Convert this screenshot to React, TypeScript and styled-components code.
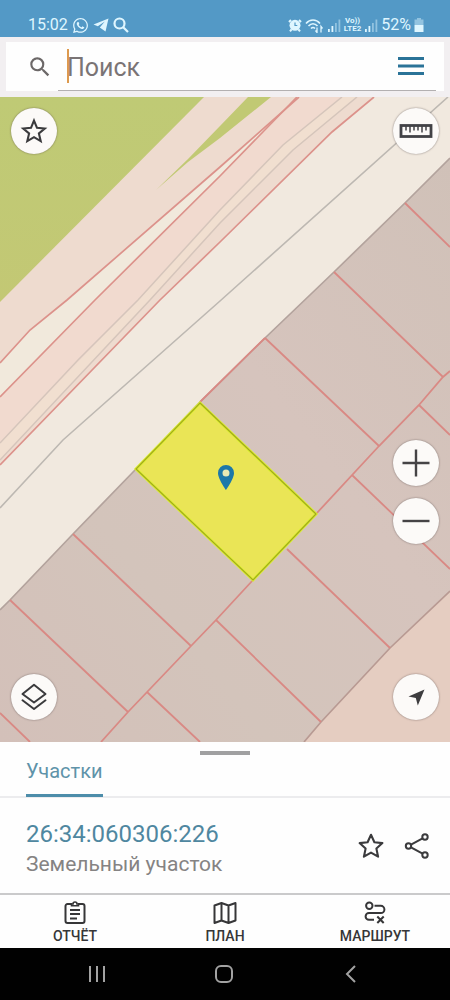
import React from "react";
import styled, { createGlobalStyle } from "styled-components";
import { FaWhatsapp } from "react-icons/fa";
import { MdSearch } from "react-icons/md";

const GlobalStyle = createGlobalStyle`
  *, *::before, *::after { box-sizing: border-box; }
  body { margin: 0; background: #fff; font-family: Roboto, "Liberation Sans", sans-serif; }
  button, input { font: inherit; color: inherit; }
  svg { display: block; flex: none; }
`;

const Screen = styled.div`
  min-height: 100vh;
  display: flex;
  flex-direction: column;
  background: #fefefe;
`;

const StatusBar = styled.div`
  height: 37px;
  flex: none;
  display: flex;
  align-items: center;
  justify-content: space-between;
  padding: 13px 26px 0 28px;
  background: #5399c6;
  color: #dff6ff;
  font-size: 16px;
  line-height: 20px;
`;

const StatusGroup = styled.div<{ $gap: number }>`
  display: flex;
  align-items: center;
  gap: ${(p) => p.$gap}px;
`;

const NetworkLabel = styled.span`
  font-size: 8px;
  line-height: 8px;
  font-weight: 700;
  text-align: center;
`;

const Header = styled.header`
  flex: none;
  height: 60px;
  padding: 5px 6px 6px;
  background: #f2eff1;
`;

const SearchCard = styled.div`
  height: 49px;
  display: flex;
  align-items: stretch;
  padding: 0 8px 0 21px;
  background: #fefefe;
  color: #6c6868;
`;

const SearchLabel = styled.label`
  width: 31px;
  flex: none;
  display: flex;
  align-items: center;
`;

const SearchField = styled.div`
  flex: 1;
  min-width: 0;
  display: flex;
  align-items: center;
  padding-left: 9px;
  border-bottom: 1px solid #b3b0b1;
`;

const Caret = styled.span`
  width: 2px;
  height: 34px;
  flex: none;
  margin-right: -2px;
  background: #dd9a4e;
`;

const SearchInput = styled.input`
  flex: 1;
  min-width: 0;
  height: 40px;
  padding: 2px 0 0;
  border: 0;
  outline: 0;
  background: transparent;
  font-size: 25px;
  &::placeholder { color: #7a7475; opacity: 1; }
`;

const IconButton = styled.button`
  width: 46px;
  height: 46px;
  flex: none;
  display: grid;
  place-items: center;
  padding: 0;
  border: 0;
  background: transparent;
  color: #3b3b3d;
`;

const MenuButton = styled(IconButton)`
  width: 30px;
  height: 48px;
  margin-right: 10px;
  color: #2a7398;
`;

const MenuSlot = styled.div`
  border-bottom: 1px solid #b3b0b1;
`;

const MapArea = styled.main`
  position: relative;
  flex: 1;
  min-height: 420px;
  display: flex;
  background: #f1e9df;
`;

const MapDrawing = styled.svg`
  position: absolute;
  inset: 0;
  width: 100%;
  height: 100%;
`;

const MapControls = styled.div`
  position: relative;
  flex: 1;
  display: flex;
  justify-content: space-between;
  padding: 11px 11px 22px;
`;

const ControlColumn = styled.div`
  display: flex;
  flex-direction: column;
  justify-content: space-between;
`;

const ZoomGroup = styled.div`
  display: flex;
  flex-direction: column;
  gap: 12px;
  margin: auto 0 130px;
`;

const RoundButton = styled(IconButton)`
  border-radius: 50%;
  background: #fcfaf8;
  box-shadow: 0 0 2px rgba(70, 60, 60, 0.65);
`;

const Sheet = styled.section`
  flex: none;
  background: #fefefe;
`;

const TabBar = styled.div`
  height: 56px;
  padding: 0 26px;
  border-bottom: 2px solid #ececee;
  background:
    linear-gradient(#a0a0a1, #a0a0a1) center 9px / 50px 4px no-repeat;
`;

const Tab = styled.button`
  height: 55px;
  padding: 5px 0 0;
  border: 0;
  border-bottom: 3px solid #4d8daa;
  background: transparent;
  color: #5f93a9;
  font-size: 20px;
  line-height: 24px;
`;

const ParcelRow = styled.article`
  height: 95px;
  display: flex;
  align-items: center;
  padding: 0 10px 0 26px;
`;

const ParcelText = styled.div`
  flex: 1;
  min-width: 0;
  padding-top: 4px;
`;

const ParcelNumber = styled.a`
  display: block;
  color: #4f87a0;
  font-size: 24px;
  line-height: 32px;
  text-decoration: none;
`;

const ParcelKind = styled.div`
  color: #858383;
  font-size: 21px;
  line-height: 28px;
`;

const ActionBar = styled.nav`
  flex: none;
  height: 55px;
  display: grid;
  grid-template-columns: repeat(3, 1fr);
  border-top: 2px solid #cacacb;
`;

const Action = styled.button`
  display: flex;
  flex-direction: column;
  align-items: center;
  gap: 2px;
  padding: 6px 0 0;
  border: 0;
  background: #fefefe;
  color: #363638;
  font-size: 14px;
  line-height: 18px;
  font-weight: 500;
`;

const SystemBar = styled.nav`
  flex: none;
  height: 52px;
  display: grid;
  grid-template-columns: repeat(3, 1fr);
  justify-items: center;
  align-items: center;
  padding: 0 36px 0 34px;
  background: #010101;
`;

const SystemButton = styled(IconButton)`
  color: #a2a2a2;
`;

const StarIcon = ({ round }: { round?: boolean }) => (
  <svg width="28" height="28" viewBox="0 0 28 28" fill="none" stroke="currentColor" strokeWidth="2.1" strokeLinejoin={round ? "round" : "miter"}>
    <path
      d={
        round
          ? "M14 2.8l3.4 7.4 8 .9-6 5.5 1.7 8.1-7.1-4.1-7.1 4.1 1.7-8.1-6-5.5 8-.9z"
          : "M14 3.6l3 7.2 7.8.7-5.9 5 1.8 7.6-6.7-4-6.7 4 1.8-7.6-5.900-5 7.800-.7z"
      }
    />
  </svg>
);

const RulerIcon = () => (
  <svg width="34" height="16" viewBox="0 0 34 16" fill="none" stroke="#424246">
    <rect x="2" y="2.5" width="30" height="11" strokeWidth="2.8" />
    <path d="M7 3v4.5M11 3v6.5M15 3v4.5M19 3v4.5M23 3v6.5M27 3v4.5" strokeWidth="1.5" />
  </svg>
);

const PlusIcon = ({ minus }: { minus?: boolean }) => (
  <svg width="28" height="28" viewBox="0 0 28 28" stroke="#454345" strokeWidth="2.4">
    <path d={minus ? "M.5 14h27" : "M.5 14h27M14 .5v27"} />
  </svg>
);

const LayersIcon = () => (
  <svg width="28" height="28" viewBox="0 0 28 28" fill="none" stroke="currentColor" strokeWidth="2" strokeLinejoin="round" strokeLinecap="round">
    <path d="M14 1.800l11.500 9.200L14 19.500 2.500 11zM2.500 17.300L14 26l11.500-8.700" />
  </svg>
);

const LocateIcon = () => (
  <svg width="28" height="28" viewBox="0 0 28 28" fill="#3d3c3e">
    <path d="M22.500 6.500L6.500 13.600l7.300 1.500 2 7.500z" />
  </svg>
);

const ShareIcon = () => (
  <svg width="28" height="28" viewBox="0 0 28 28" fill="none" stroke="currentColor" strokeWidth="2">
    <circle cx="5.500" cy="14" r="2.700" />
    <circle cx="22" cy="5" r="2.700" />
    <circle cx="22" cy="23" r="2.700" />
    <path d="M8 12.600l11.600-6.300M8 15.400l11.600 6.300" />
  </svg>
);

const ReportIcon = () => (
  <svg width="24" height="24" viewBox="0 0 24 24" fill="none" stroke="currentColor" strokeWidth="2">
    <path d="M9 3H4.500a2 2 0 0 0-2 2V20a2 2 0 0 0 2 2h15a2 2 0 0 0 2-2V5a2 2 0 0 0-2-2H15" />
    <path d="M8.500 4.800V3H10a2 2 0 0 1 4 0h1.500v1.800z" strokeWidth="1.600" />
    <path d="M7 9h10M7 13h10M7 17.500h7" />
  </svg>
);

const PlanIcon = () => (
  <svg width="24" height="24" viewBox="0 0 24 24" fill="none" stroke="currentColor" strokeWidth="2" strokeLinejoin="round">
    <path d="M1.500 4.500L8.500 2l7 2.500L22.500 2v17.500l-7 2.500-7-2.500-7 2.500zM8.500 2v17.500M15.500 4.500V22" />
  </svg>
);

const RouteIcon = () => (
  <svg width="24" height="24" viewBox="0 0 24 24" fill="none" stroke="currentColor" strokeWidth="2">
    <circle cx="6.300" cy="4.800" r="3.200" />
    <path d="M11.500 4.800h6.300a3.600 3.600 0 0 1 0 7.200H6a3.400 3.400 0 0 0 0 6.800h5" />
    <path d="M14.300 15.500l6.400 6.500M20.700 15.500L14.300 22" />
  </svg>
);

const SignalIcon = () => (
  <svg width="14" height="14" viewBox="0 0 14 14" fill="currentColor">
    <path d="M1 11h1.800v3H1zM4.500 8h1.800v6H4.500z" />
    <path d="M8 5h1.800v9H8zM11.500 1.500h1.800V14h-1.800z" opacity=".45" />
  </svg>
);

const ROAD = "#eedbcf";
const BOUNDARY = "#d98984";

const cadastralLines = [
  "M405 203L450 247",
  "M334 272L443 377",
  "M265 338L379 446",
  "M73 534L191 646",
  "M10 600L128 712",
  "M0 713L30 742",
  "M450 371L443 377L419 405L379 446L316 514",
  "M253 580L216 620L191 646L128 712L101 742",
  "M419 405L450 435",
  "M352 475L450 569",
  "M287 549L390 648",
  "M216 620L321 722",
  "M147 692L200 742",
  "M265 338L200 402",
];

const CadastralMap = () => (
  <MapDrawing viewBox="0 97 450 645" preserveAspectRatio="xMidYMid slice" aria-label="Карта" fill="none">
    <defs>
      <linearGradient id="parcels" x1="0" y1="1" x2="1" y2="0">
        <stop offset="0" stopColor="#d3c0b9" />
        <stop offset=".3" stopColor="#d3c4bb" />
        <stop offset=".6" stopColor="#d6c4bd" />
        <stop offset="1" stopColor="#d0c1b8" />
      </linearGradient>
      <linearGradient id="grass" x1="0" y1="0" x2="0" y2="1">
        <stop offset="0" stopColor="#bfca75" />
        <stop offset="1" stopColor="#c3c874" />
      </linearGradient>
    </defs>
    <path fill="#f1e9df" d="M0 97H450V742H0z" />
    <path fill={ROAD} d="M0 97H374L332 132L220 242L160 300L0 465z" />
    <path fill="#f1dacf" d="M297 97H342L283 145L220 210L138 300L0 443V397L95 300L220 176z" />
    <path fill="#f1e9dc" d="M298 97L220 167L67 300L30 330L0 363V397L95 300L220 176z" />
    <path fill="#f1dfd0" d="M342 97L283 145L220 210L138 300L0 443V460L150 300L220 223L293 150L357 97z" />
    <path fill="url(#grass)" d="M0 97H204L0 302z" />
    <path fill="#c1c974" d="M156 190L188 159L220 126L248 97H271L220 138L188 162z" />
    <path fill="url(#parcels)" d="M450 158L334 272L265 338L200 402L136 469L73 534L0 610V742H304L390 648L450 591z" />
    <path fill="#e5cdc1" d="M450 591L390 648L321 722L304 742H450z" />

    <g stroke="#d5c5bb" strokeWidth="1.500">
      <path d="M342 97L283 145L220 210L138 300L78 360L0 443" />
      <path d="M357 97L293 150L220 223L150 300L0 460" />
    </g>
    <g stroke="#dc928b" strokeWidth="1.700">
      <path d="M299 97L220 167L67 300L30 330L0 363" />
      <path d="M297 97L220 176L95 300L0 397" />
      <path d="M374 97L332 132L220 242L160 300L0 465" />
    </g>
    <path stroke="#bdb8b2" strokeWidth="1.600" d="M448 97L220 301L63 440L0 508" />
    <path stroke="#b3a39d" strokeWidth="1.700" d="M450 158L405 203L334 272L265 338L200 402L136 469L73 534L10 600L0 610" />
    <path stroke="#b89a93" strokeWidth="1.700" d="M450 591L390 648L321 722L304 742" />
    <path stroke={BOUNDARY} strokeWidth="1.800" d={cadastralLines.join("")} />

    <path fill="#eae556" stroke="#dcf02f" strokeWidth="3" d="M200 403L316 514L253 580L136 469z" />
    <path stroke="#a2a91d" strokeWidth="1.200" d="M200 403L316 514L253 580L136 469z" />
    <circle cx="226" cy="473" r="5" fill="#e9eab4" />
    <path
      fill="#1d78a9"
      fillRule="evenodd"
      d="M226 465a8 8 0 0 0-8 8c0 6 8 17 8 17s8-11 8-17a8 8 0 0 0-8-8zm0 4.500a3.500 3.500 0 1 1 0 7 3.500 3.500 0 0 1 0-7z"
    />
  </MapDrawing>
);

export default function App() {
  return (
    <Screen>
      <GlobalStyle />
      <StatusBar>
        <StatusGroup $gap={4}>
          <span>15:02</span>
          <FaWhatsapp size={17} />
          <svg width="16" height="16" viewBox="0 0 16 16" fill="currentColor">
            <path d="M15.500 1.500L.5 7.500l4.300 1.700 7-4.700-5 6 5.700 4z" />
          </svg>
          <svg width="16" height="16" viewBox="0 0 16 16" fill="none" stroke="currentColor" strokeWidth="2.200">
            <circle cx="6.500" cy="6.500" r="5" />
            <path d="M10 10l5 5" />
          </svg>
        </StatusGroup>
        <StatusGroup $gap={3}>
          <svg width="14" height="14" viewBox="0 0 14 14">
            <path d="M3 2L1 4M11 2l2 2M3.500 11.500L2 13.300M10.500 11.500l1.500 1.800" stroke="currentColor" strokeWidth="2" />
            <circle cx="7" cy="7.300" r="5.500" fill="currentColor" />
            <path d="M7 4.500v3h2.300" stroke="#5399c6" strokeWidth="1.200" fill="none" />
          </svg>
          <svg width="19" height="15" viewBox="0 0 19 15" fill="none" stroke="currentColor" strokeWidth="1.600">
            <path d="M1 5.500c4-4.600 10-4.600 14 0M3.500 8c2.800-3 6.200-3 9 0M6 10.500c1.300-1.300 2.700-1.300 4 0" />
            <path d="M12 9.500v5l-1.500-2M16 14.500v-6l1.500 2" strokeWidth="1.300" />
          </svg>
          <SignalIcon />
          <NetworkLabel>
            Vo))
            <br />
            LTE2
          </NetworkLabel>
          <SignalIcon />
          <span>52%</span>
          <svg width="10" height="15" viewBox="0 0 10 15" fill="currentColor">
            <path d="M3 0h4v1.500h2.500V7H.5V1.500H3z" opacity=".45" />
            <path d="M.5 7h9v7h-9z" />
          </svg>
        </StatusGroup>
      </StatusBar>

      <Header>
        <SearchCard>
          <SearchLabel htmlFor="search" aria-label="Поиск">
            <MdSearch size={26} />
          </SearchLabel>
          <SearchField>
            <Caret />
            <SearchInput id="search" type="text" placeholder="Поиск" />
          </SearchField>
          <MenuSlot>
            <MenuButton type="button" aria-label="Меню">
              <svg width="28" height="20" viewBox="0 0 28 20" stroke="currentColor" strokeWidth="2.800">
                <path d="M1 2.500h26M1 10h26M1 17.500h26" />
              </svg>
            </MenuButton>
          </MenuSlot>
        </SearchCard>
      </Header>

      <MapArea>
        <CadastralMap />
        <MapControls>
          <ControlColumn>
            <RoundButton type="button" aria-label="Избранное">
              <StarIcon />
            </RoundButton>
            <RoundButton type="button" aria-label="Слои">
              <LayersIcon />
            </RoundButton>
          </ControlColumn>
          <ControlColumn>
            <RoundButton type="button" aria-label="Измерить">
              <RulerIcon />
            </RoundButton>
            <ZoomGroup>
              <RoundButton type="button" aria-label="Приблизить">
                <PlusIcon />
              </RoundButton>
              <RoundButton type="button" aria-label="Отдалить">
                <PlusIcon minus />
              </RoundButton>
            </ZoomGroup>
            <RoundButton type="button" aria-label="Моё местоположение">
              <LocateIcon />
            </RoundButton>
          </ControlColumn>
        </MapControls>
      </MapArea>

      <Sheet>
        <TabBar>
          <Tab type="button">Участки</Tab>
        </TabBar>
        <ParcelRow>
          <ParcelText>
            <ParcelNumber href="#parcel">26:34:060306:226</ParcelNumber>
            <ParcelKind>Земельный участок</ParcelKind>
          </ParcelText>
          <IconButton type="button" aria-label="В избранное">
            <StarIcon round />
          </IconButton>
          <IconButton type="button" aria-label="Поделиться">
            <ShareIcon />
          </IconButton>
        </ParcelRow>
      </Sheet>

      <ActionBar>
        <Action type="button">
          <ReportIcon />
          ОТЧЁТ
        </Action>
        <Action type="button">
          <PlanIcon />
          ПЛАН
        </Action>
        <Action type="button">
          <RouteIcon />
          МАРШРУТ
        </Action>
      </ActionBar>

      <SystemBar>
        <SystemButton type="button" aria-label="Недавние">
          <svg width="18" height="18" viewBox="0 0 18 18" stroke="currentColor" strokeWidth="2">
            <path d="M2 1v16M9 1v16M16 1v16" />
          </svg>
        </SystemButton>
        <SystemButton type="button" aria-label="Домой">
          <svg width="18" height="18" viewBox="0 0 18 18" fill="none" stroke="currentColor" strokeWidth="2">
            <rect x="1" y="1" width="16" height="16" rx="5" />
          </svg>
        </SystemButton>
        <SystemButton type="button" aria-label="Назад">
          <svg width="18" height="18" viewBox="0 0 18 18" fill="none" stroke="currentColor" strokeWidth="2">
            <path d="M13 1L5 9l8 8" />
          </svg>
        </SystemButton>
      </SystemBar>
    </Screen>
  );
}
